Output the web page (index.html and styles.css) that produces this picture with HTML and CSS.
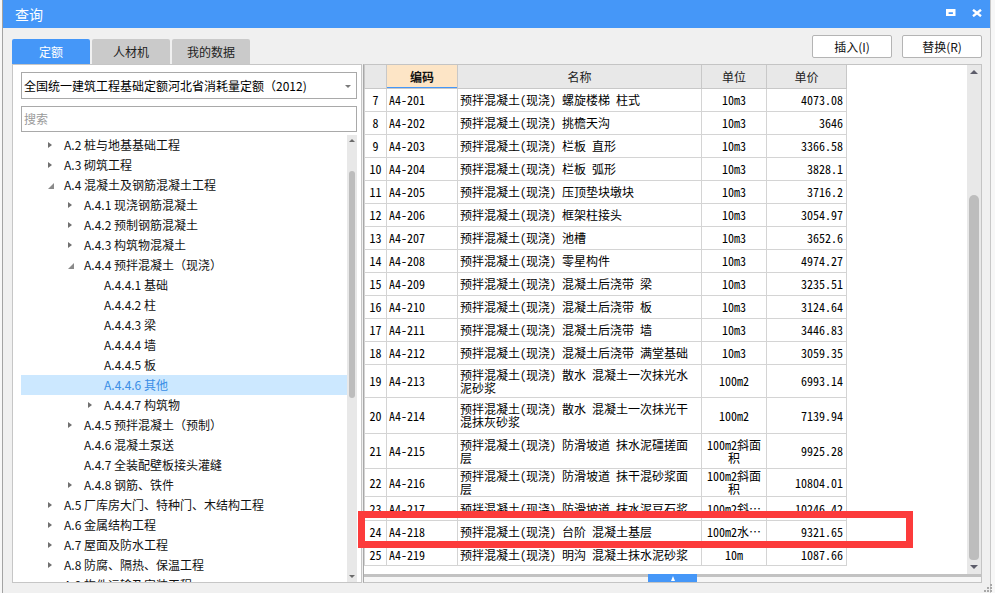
FILE: index.html
```html
<!DOCTYPE html>
<html lang="zh-CN">
<head>
<meta charset="utf-8">
<title>查询</title>
<link rel="stylesheet" href="styles.css">
</head>
<body>
<div class="dialog">
  <div class="titlebar">
    <span class="title">查询</span>
    <div class="winbtns">
      <svg class="ic-max" width="10" height="7" viewBox="0 0 10 7"><path fill="#fff" fill-rule="evenodd" d="M0 0H9.5V7H0Z M2.6 3.2V5H6.9V3.2Z"/></svg>
      <svg class="ic-close" width="10" height="8" viewBox="0 0 10 8"><path d="M1 0.8L9 7.2M9 0.8L1 7.2" stroke="#fff" stroke-width="2.4" fill="none"/></svg>
    </div>
  </div>
  <div class="content">
    <div class="toprow">
      <div class="tabs">
        <div class="tab active">定额</div>
        <div class="tab">人材机</div>
        <div class="tab">我的数据</div>
      </div>
      <div class="actions">
        <button class="btn">插入(I)</button>
        <button class="btn">替换(R)</button>
      </div>
    </div>
    <div class="main">
      <div class="leftpanel">
        <div class="select"><span>全国统一建筑工程基础定额河北省消耗量定额（2012)</span><i class="caret"></i></div>
        <div class="search">搜索</div>
        <div class="treebox">
          <div class="tree">
            <div class="node l1 c">A.2 桩与地基基础工程</div>
            <div class="node l1 c">A.3 砌筑工程</div>
            <div class="node l1 e">A.4 混凝土及钢筋混凝土工程</div>
            <div class="node l2 c">A.4.1 现浇钢筋混凝土</div>
            <div class="node l2 c">A.4.2 预制钢筋混凝土</div>
            <div class="node l2 c">A.4.3 构筑物混凝土</div>
            <div class="node l2 e">A.4.4 预拌混凝土（现浇）</div>
            <div class="node l3">A.4.4.1 基础</div>
            <div class="node l3">A.4.4.2 柱</div>
            <div class="node l3">A.4.4.3 梁</div>
            <div class="node l3">A.4.4.4 墙</div>
            <div class="node l3">A.4.4.5 板</div>
            <div class="node l3 selected">A.4.4.6 其他</div>
            <div class="node l3 c">A.4.4.7 构筑物</div>
            <div class="node l2 c">A.4.5 预拌混凝土（预制）</div>
            <div class="node l2">A.4.6 混凝土泵送</div>
            <div class="node l2">A.4.7 全装配壁板接头灌缝</div>
            <div class="node l2 c">A.4.8 钢筋、铁件</div>
            <div class="node l1 c">A.5 厂库房大门、特种门、木结构工程</div>
            <div class="node l1 c">A.6 金属结构工程</div>
            <div class="node l1 c">A.7 屋面及防水工程</div>
            <div class="node l1 c">A.8 防腐、隔热、保温工程</div>
            <div class="node l1 c">A.9 构件运输及安装工程</div>
          </div>
          <div class="vscroll vs-small">
            <i class="arr up"></i>
            <div class="thumb"></div>
            <i class="arr down"></i>
          </div>
        </div>
      </div>
      <div class="grid">
        <div class="gridtop">
          <div class="tablewrap">
            <table class="dt">
              <colgroup><col class="c-no"><col class="c-code"><col class="c-name"><col class="c-unit"><col class="c-price"></colgroup>
              <thead>
                <tr><th></th><th class="sorted">编码</th><th>名称</th><th>单位</th><th>单价</th></tr>
              </thead>
              <tbody>
                <tr><td class="no">7</td><td>A4-201</td><td>预拌混凝土(现浇) 螺旋楼梯 柱式</td><td class="u">10m3</td><td class="p">4073.08</td></tr>
                <tr><td class="no">8</td><td>A4-202</td><td>预拌混凝土(现浇) 挑檐天沟</td><td class="u">10m3</td><td class="p">3646</td></tr>
                <tr><td class="no">9</td><td>A4-203</td><td>预拌混凝土(现浇) 栏板 直形</td><td class="u">10m3</td><td class="p">3366.58</td></tr>
                <tr><td class="no">10</td><td>A4-204</td><td>预拌混凝土(现浇) 栏板 弧形</td><td class="u">10m3</td><td class="p">3828.1</td></tr>
                <tr><td class="no">11</td><td>A4-205</td><td>预拌混凝土(现浇) 压顶垫块墩块</td><td class="u">10m3</td><td class="p">3716.2</td></tr>
                <tr><td class="no">12</td><td>A4-206</td><td>预拌混凝土(现浇) 框架柱接头</td><td class="u">10m3</td><td class="p">3054.97</td></tr>
                <tr><td class="no">13</td><td>A4-207</td><td>预拌混凝土(现浇) 池槽</td><td class="u">10m3</td><td class="p">3652.6</td></tr>
                <tr><td class="no">14</td><td>A4-208</td><td>预拌混凝土(现浇) 零星构件</td><td class="u">10m3</td><td class="p">4974.27</td></tr>
                <tr><td class="no">15</td><td>A4-209</td><td>预拌混凝土(现浇) 混凝土后浇带 梁</td><td class="u">10m3</td><td class="p">3235.51</td></tr>
                <tr><td class="no">16</td><td>A4-210</td><td>预拌混凝土(现浇) 混凝土后浇带 板</td><td class="u">10m3</td><td class="p">3124.64</td></tr>
                <tr><td class="no">17</td><td>A4-211</td><td>预拌混凝土(现浇) 混凝土后浇带 墙</td><td class="u">10m3</td><td class="p">3446.83</td></tr>
                <tr><td class="no">18</td><td>A4-212</td><td>预拌混凝土(现浇) 混凝土后浇带 满堂基础</td><td class="u">10m3</td><td class="p">3059.35</td></tr>
                <tr class="h33"><td class="no">19</td><td>A4-213</td><td class="wrap">预拌混凝土(现浇) 散水 混凝土一次抹光水泥砂浆</td><td class="u">100m2</td><td class="p">6993.14</td></tr>
                <tr class="h36"><td class="no">20</td><td>A4-214</td><td class="wrap">预拌混凝土(现浇) 散水 混凝土一次抹光干混抹灰砂浆</td><td class="u">100m2</td><td class="p">7139.94</td></tr>
                <tr class="h35"><td class="no">21</td><td>A4-215</td><td class="wrap">预拌混凝土(现浇) 防滑坡道 抹水泥礓搓面层</td><td class="u wrap">100m2斜面积</td><td class="p">9925.28</td></tr>
                <tr class="h28"><td class="no">22</td><td>A4-216</td><td class="wrap">预拌混凝土(现浇) 防滑坡道 抹干混砂浆面层</td><td class="u wrap">100m2斜面积</td><td class="p">10804.01</td></tr>
                <tr class="h24"><td class="no">23</td><td>A4-217</td><td>预拌混凝土(现浇) 防滑坡道 抹水泥豆石浆</td><td class="u">100m2斜⋯</td><td class="p">10246.42</td></tr>
                <tr><td class="no">24</td><td>A4-218</td><td>预拌混凝土(现浇) 台阶 混凝土基层</td><td class="u">100m2水⋯</td><td class="p">9321.65</td></tr>
                <tr class="h22"><td class="no">25</td><td>A4-219</td><td>预拌混凝土(现浇) 明沟 混凝土抹水泥砂浆</td><td class="u">10m</td><td class="p">1087.66</td></tr>
              </tbody>
            </table>
          </div>
          <div class="vscroll vs-big">
            <i class="arr up"></i>
            <div class="thumb"></div>
            <i class="arr down"></i>
          </div>
        </div>
        <div class="hscroll"><div class="htab"><i class="harr"></i></div></div>
      </div>
    </div>
  </div>
  <div class="mark"></div>
  <svg class="grip" width="8" height="8" viewBox="0 0 8 8"><g fill="#a8a8a8"><rect x="6" y="0" width="2" height="2"/><rect x="3" y="3" width="2" height="2"/><rect x="6" y="3" width="2" height="2"/><rect x="0" y="6" width="2" height="2"/><rect x="3" y="6" width="2" height="2"/><rect x="6" y="6" width="2" height="2"/></g></svg>
</div>
</body>
</html>
```
FILE: styles.css
```css
* { box-sizing: border-box; }
html, body { margin: 0; padding: 0; }
body {
  width: 995px;
  height: 593px;
  overflow: hidden;
  background: #f7f7f7;
  font-family: "Noto Sans CJK SC", "Noto Sans", sans-serif;
  font-size: 12px;
  color: #000;
}
.dialog {
  position: relative;
  margin-left: 2px;
  width: 989px;
  height: 593px;
  background: #f0f0f0;
  border-left: 1px solid #a3a3a3;
  border-right: 1px solid #c8c8c8;
  display: flex;
  flex-direction: column;
}
.titlebar {
  height: 28px;
  flex: none;
  background: #4597f8;
  display: flex;
  align-items: center;
  justify-content: space-between;
  padding: 0 8px 0 12px;
}
.title {
  color: #fff;
  font-size: 14px;
  line-height: 28px;
}
.winbtns {
  display: flex;
  align-items: flex-start;
  gap: 16px;
  height: 28px;
  padding-top: 9px;
}

.content {
  flex: 1;
  display: flex;
  flex-direction: column;
  padding: 0 8px 0 9px;
}
.toprow {
  height: 36px;
  display: flex;
  justify-content: space-between;
}
.tabs {
  align-self: flex-end;
  display: flex;
  gap: 2px;
}
.tab {
  width: 78px;
  height: 25px;
  line-height: 25px;
  text-align: center;
  background: #cacaca;
  color: #222;
  font-size: 12px;
  border-radius: 2px 2px 0 0;
}
.tab.active {
  background: #4597f8;
  color: #fff;
}
.actions {
  display: flex;
  gap: 10px;
  padding-top: 7px;
}
.btn {
  width: 80px;
  height: 23px;
  padding: 0;
  background: #fff;
  border: 1px solid #b4b4b4;
  border-radius: 2px;
  font-family: "Noto Sans CJK SC", "Noto Sans", sans-serif;
  font-size: 12px;
  color: #111;
  line-height: 21px;
}

.main {
  display: flex;
  gap: 1px;
  height: 519px;
}
.leftpanel {
  width: 350px;
  height: 519px;
  background: #fff;
  border: 1px solid #c6c6c6;
  padding: 7px 4px 0 8px;
  display: flex;
  flex-direction: column;
}
.select {
  position: relative;
  height: 27px;
  border: 1px solid #a9a9a9;
  padding-left: 2px;
  line-height: 25px;
  font-size: 12px;
  white-space: nowrap;
}
.caret {
  position: absolute;
  right: 5px;
  top: 12px;
  width: 0;
  height: 0;
  border-left: 3px solid transparent;
  border-right: 3px solid transparent;
  border-top: 3px solid #7a7a7a;
}
.search {
  margin-top: 7px;
  height: 26px;
  border: 1px solid #a9a9a9;
  padding-left: 2px;
  line-height: 24px;
  color: #9a9a9a;
}
.treebox {
  margin-top: 3px;
  flex: 1;
  display: flex;
  min-height: 0;
}
.tree {
  flex: 1;
  overflow: hidden;
}
.node {
  height: 20px;
  line-height: 20px;
  white-space: nowrap;
  position: relative;
  color: #111;
}
.node.l1 { padding-left: 43px; }
.node.l2 { padding-left: 63px; }
.node.l3 { padding-left: 83px; }
.node.c::before {
  content: "";
  position: absolute;
  top: 7px;
  width: 0;
  height: 0;
  border-top: 3.5px solid transparent;
  border-bottom: 3.5px solid transparent;
  border-left: 4px solid #707070;
}
.node.e::before {
  content: "";
  position: absolute;
  top: 8px;
  width: 0;
  height: 0;
  border-left: 6px solid transparent;
  border-bottom: 6px solid #8a8a8a;
}
.node.l1::before { left: 27px; }
.node.l2::before { left: 47px; }
.node.l3::before { left: 67px; }
.node.selected {
  background: #cce8ff;
  color: #3a8ee6;
}

.vscroll {
  flex: none;
  background: #e8e8e8;
  display: flex;
  flex-direction: column;
  align-items: center;
}
.vs-small { width: 10px; }
.vs-small .arr.up { margin-top: 4px; }
.vs-small .thumb {
  margin-top: 29px;
  width: 6px;
  height: 227px;
  border-radius: 3px;
  background: #bdbdbd;
}
.vs-small .arr.down { margin-top: auto; margin-bottom: 4px; }
.arr {
  display: block;
  width: 0;
  height: 0;
  border-left: 3px solid transparent;
  border-right: 3px solid transparent;
}
.arr.up { border-bottom: 3px solid #6b6b6b; }
.arr.down { border-top: 3px solid #6b6b6b; }
.vs-big { width: 14px; }
.vs-big .arr { border-left-width: 4px; border-right-width: 4px; }
.vs-big .arr.up { margin-top: 5px; border-bottom-width: 4px; border-bottom-color: #5d5d6a; }
.vs-big .thumb {
  margin-top: 121px;
  width: 10px;
  height: 365px;
  border-radius: 5px 5px 4px 4px;
  background: #bdbdbd;
}
.vs-big .arr.down { margin-top: auto; margin-bottom: 5px; border-top-width: 4px; border-top-color: #5d5d6a; }

.grid {
  width: 619px;
  height: 519px;
  border: 1px solid #c4c4c4;
  border-left-color: #a8a8a8;
  background: #fff;
  display: flex;
  flex-direction: column;
}
.gridtop {
  height: 509px;
  display: flex;
}
.tablewrap {
  flex: 1;
  overflow: hidden;
  background: #fff;
}
.dt {
  border-collapse: collapse;
  table-layout: fixed;
  width: 482px;
  font-family: "Noto Sans Mono CJK SC", "Noto Sans CJK SC", monospace;
  font-size: 12px;
  color: #000;
}
.c-no { width: 22px; }
.c-code { width: 71px; }
.c-name { width: 244px; }
.c-unit { width: 65px; }
.c-price { width: 80px; }
.dt th {
  height: 23px;
  padding: 0;
  background: #e8e8e8;
  border: 1px solid #c8c8c8;
  border-top: none;
  font-family: "Noto Sans CJK SC", "Noto Sans", sans-serif;
  font-weight: normal;
  font-size: 12px;
  color: #222;
  text-align: center;
}
.dt th.sorted {
  background: #fde5c6;
  font-weight: bold;
  color: #111;
  box-shadow: inset 0 -1px 0 #4597f8;
}
.dt td {
  height: 23px;
  padding: 0 2px;
  border: 1px solid #d4d4d4;
  white-space: nowrap;
  overflow: hidden;
  line-height: 13px;
  vertical-align: middle;
}
.dt td.no { text-align: center; padding: 0; }
.dt td.u { text-align: center; }
.dt td.p { text-align: right; padding-right: 3px; }
.dt td.wrap { white-space: normal; word-break: break-all; }
.dt tr.h33 td { height: 33px; }
.dt tr.h36 td { height: 36px; }
.dt tr.h35 td { height: 35px; }
.dt tr.h28 td { height: 28px; }
.dt tr.h24 td { height: 24px; }
.dt tr.h22 td { height: 22px; }

.hscroll {
  height: 8px;
  border-top: 3px solid #c2c2c2;
  background: #f6f6f6;
  display: flex;
  padding-left: 284px;
}
.htab {
  margin-top: -3px;
  width: 49px;
  height: 8px;
  background: #4597f8;
  display: flex;
  justify-content: center;
  align-items: flex-end;
  padding-bottom: 1px;
}
.harr {
  display: block;
  width: 0;
  height: 0;
  border-left: 2px solid transparent;
  border-right: 2px solid transparent;
  border-bottom: 5px solid #fff;
}

.mark {
  position: absolute;
  left: 355px;
  top: 511px;
  width: 555px;
  height: 37px;
  border: 7px solid #fc3b3b;
}
.grip {
  position: absolute;
  right: -2px;
  bottom: 1px;
}
```
